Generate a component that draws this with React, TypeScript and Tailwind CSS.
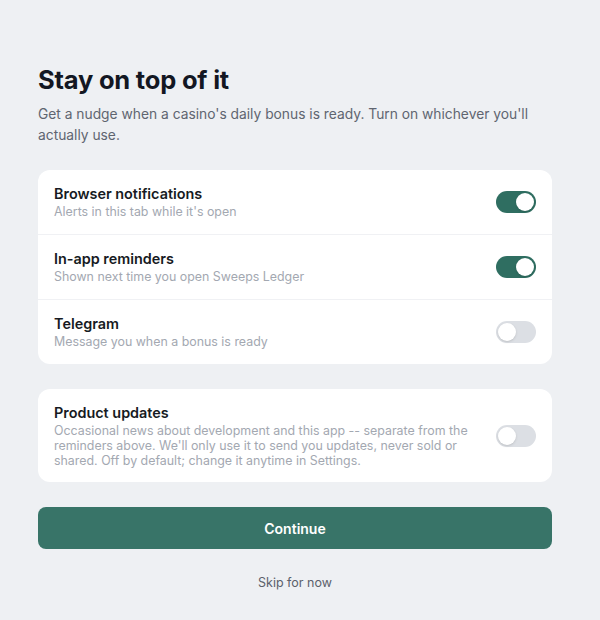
import React, { useState } from 'react';

interface ToggleProps {
    on: boolean;
    onChange: (v: boolean) => void;
}

const Toggle: React.FC<ToggleProps> = ({ on, onChange }) => (
    <button
        type="button"
        onClick={() => onChange(!on)}
        className={`relative shrink-0 w-[40px] h-[22px] rounded-full transition-colors ${on ? 'bg-[#2f6e61]' : 'bg-[#dcdfe4]'}`}
    >
        <span
            className={`absolute top-[2px] w-[18px] h-[18px] rounded-full bg-white shadow-sm transition-all ${on ? 'left-[20px]' : 'left-[2px]'}`}
        />
    </button>
);

interface RowProps {
    label: string;
    desc: string;
    on: boolean;
    onChange: (v: boolean) => void;
    border?: boolean;
}

const Row: React.FC<RowProps> = ({ label, desc, on, onChange, border }) => (
    <div className={`flex items-center gap-6 px-4 py-[14px] ${border ? 'border-t border-[#f0f1f4]' : ''}`}>
        <div className="flex-1 min-w-0">
            <div className="text-[14.4px] leading-5 font-semibold text-[#161a22]">{label}</div>
            <div className="text-[12.4px] leading-4 text-[#a3a8b1]">{desc}</div>
        </div>
        <Toggle on={on} onChange={onChange} />
    </div>
);

export default function App() {
    const [browser, setBrowser] = useState(true);
    const [inApp, setInApp] = useState(true);
    const [telegram, setTelegram] = useState(false);
    const [updates, setUpdates] = useState(false);

    return (
        <div className="min-h-[620px] bg-[#eef0f3] pt-[64px] pl-[38px]" style={{ fontFamily: 'Inter, "Noto Sans", sans-serif' }}>
            <div className="w-[514px]">
                <h1 className="text-[25.5px] leading-8 font-bold text-[#131722] tracking-[-0.2px]">Stay on top of it</h1>
                <p className="mt-2 text-[13.8px] leading-[21px] text-[#5f6570]">
                    Get a nudge when a casino's daily bonus is ready. Turn on whichever you'll actually use.
                </p>

                <div className="mt-6 bg-white rounded-xl overflow-hidden">
                    <Row label="Browser notifications" desc="Alerts in this tab while it's open" on={browser} onChange={setBrowser} />
                    <Row label="In-app reminders" desc="Shown next time you open Sweeps Ledger" on={inApp} onChange={setInApp} border />
                    <Row label="Telegram" desc="Message you when a bonus is ready" on={telegram} onChange={setTelegram} border />
                </div>

                <div className="mt-[25px] bg-white rounded-xl">
                    <div className="flex items-center gap-6 px-4 pt-[14px] pb-[14px]">
                        <div className="flex-1 min-w-0">
                            <div className="text-[14.4px] leading-5 font-semibold text-[#161a22]">Product updates</div>
                            <div className="text-[12.4px] leading-[15px] text-[#a3a8b1]">
                                Occasional news about development and this app -- separate from the reminders above. We'll only use it to send you updates, never sold or shared. Off by default; change it anytime in Settings.
                            </div>
                        </div>
                        <Toggle on={updates} onChange={setUpdates} />
                    </div>
                </div>

                <button
                    type="button"
                    className="block mt-[25px] w-full h-[42px] rounded-lg bg-[#387468] text-white text-[14px] font-semibold"
                >
                    Continue
                </button>

                <button type="button" className="block mx-auto mt-[24px] text-[12.5px] leading-5 text-[#5b616b]">
                    Skip for now
                </button>
            </div>
        </div>
    );
}
